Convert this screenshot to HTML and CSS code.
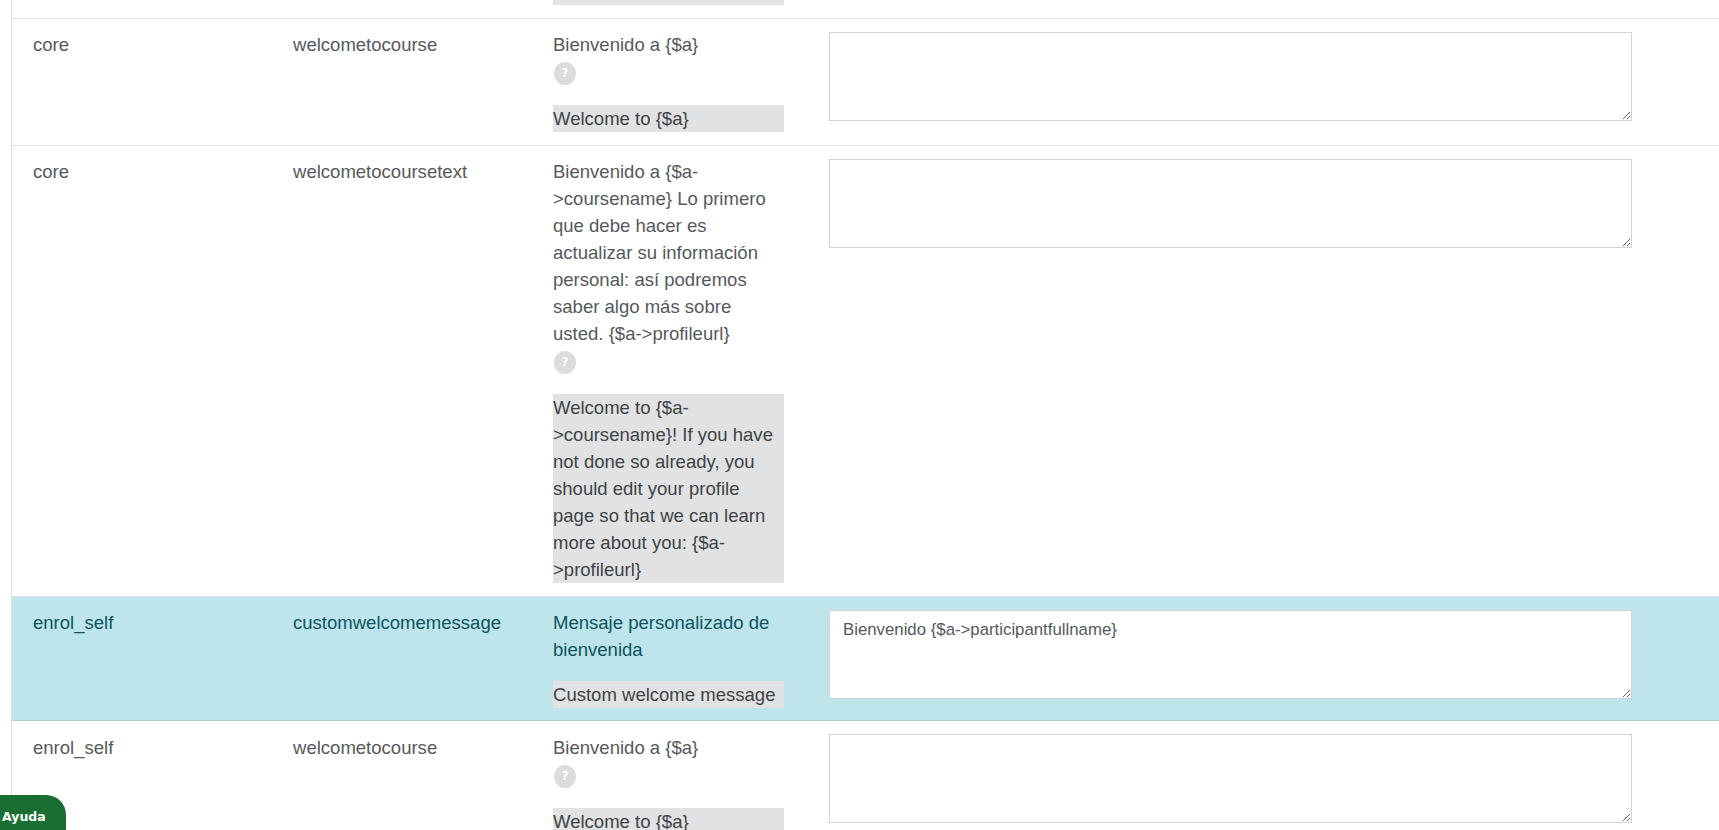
FILE: index.html
```html
<!DOCTYPE html>
<html lang="es">
<head>
<meta charset="utf-8">
<title>Personalización de idioma</title>
<link rel="stylesheet" href="styles.css">
</head>
<body>
<main class="page">
<table class="strings">
<colgroup><col class="c1"><col class="c2"><col class="c3"><col class="c4"></colgroup>
<tbody>
<tr class="cut"><td></td><td></td><td><div class="tail"></div></td><td></td></tr>
<tr>
<td>core</td><td>welcometocourse</td>
<td><div class="local">Bienvenido a {$a}</div><div class="help"><span class="q">?</span></div><div class="orig">Welcome to {$a}</div></td>
<td><textarea class="field"></textarea></td>
</tr>
<tr>
<td>core</td><td>welcometocoursetext</td>
<td><div class="local">Bienvenido a {$a-&gt;coursename} Lo primero que debe hacer es actualizar su información personal: así podremos saber algo más sobre usted. {$a-&gt;profileurl}</div><div class="help"><span class="q">?</span></div><div class="orig">Welcome to {$a-&gt;coursename}! If you have not done so already, you should edit your profile page so that we can learn more about you: {$a-&gt;profileurl}</div></td>
<td><textarea class="field"></textarea></td>
</tr>
<tr class="hl">
<td>enrol_self</td><td>customwelcomemessage</td>
<td><div class="local">Mensaje personalizado de bienvenida</div><div class="orig">Custom welcome message</div></td>
<td><textarea class="field">Bienvenido {$a-&gt;participantfullname}</textarea></td>
</tr>
<tr class="after">
<td>enrol_self</td><td>welcometocourse</td>
<td><div class="local">Bienvenido a {$a}</div><div class="help"><span class="q">?</span></div><div class="orig">Welcome to {$a}</div></td>
<td><textarea class="field"></textarea></td>
</tr>
</tbody>
</table>
</main>
<a class="ayuda" href="#">Ayuda</a>
</body>
</html>
```
FILE: styles.css
```css
html, body {
  margin: 0;
  height: 830px;
  overflow: hidden;
  background: #fff;
}
body {
  font-family: "Liberation Sans", Arial, sans-serif;
  font-size: 18.55px;
  line-height: 27px;
  color: #55595c;
}
.page {
  margin-left: 11px;
  border-left: 1px solid #dee2e6;
  height: 830px;
}
.strings {
  width: 1707px;
  table-layout: fixed;
  border-collapse: separate;
  border-spacing: 0;
}
.c1, .c2 { width: 260px; }
.c3 { width: 276px; }
.strings td {
  padding: 12px 24px 13px 21px;
  vertical-align: top;
  border-top: 1px solid #dee2e6;
}
.strings .cut td {
  padding: 0 24px 13px 21px;
  border-top: 0;
}
.tail {
  height: 5px;
  background: #e0e2e4;
}
.strings .hl td {
  padding-bottom: 12px;
  background: #bfe5ec;
  color: #0c5460;
}
.strings .after td {
  padding-top: 13px;
  border-top-color: #abcdd3;
}
.after .field { margin-top: 0; }
.help {
  height: 25px;
  padding-top: 4px;
}
.q {
  display: block;
  width: 22px;
  height: 23px;
  margin-left: 1px;
  border-radius: 50%;
  background: #dcdcdc;
  color: #fff;
  font-family: "DejaVu Sans", sans-serif;
  font-size: 12px;
  font-weight: 700;
  line-height: 23px;
  text-align: center;
}
.orig {
  margin-top: 18px;
  background: #e0e2e4;
  color: #3f4245;
}
.field {
  display: block;
  box-sizing: border-box;
  width: 803px;
  height: 89px;
  margin: 1px 0 0;
  padding: 8px 13px;
  border: 1px solid #ced4da;
  background: #fff;
  color: #55595c;
  font-family: "Liberation Sans", Arial, sans-serif;
  font-size: 16.8px;
  line-height: 22px;
}
.ayuda {
  position: fixed;
  left: 0;
  bottom: 0;
  width: 64px;
  height: 35px;
  padding-left: 2px;
  border-radius: 0 20px 0 0;
  background: #1b6e31;
  color: #fff;
  font-family: "DejaVu Sans", Verdana, sans-serif;
  font-size: 12.5px;
  font-weight: 700;
  line-height: 44px;
  text-decoration: none;
}
```
